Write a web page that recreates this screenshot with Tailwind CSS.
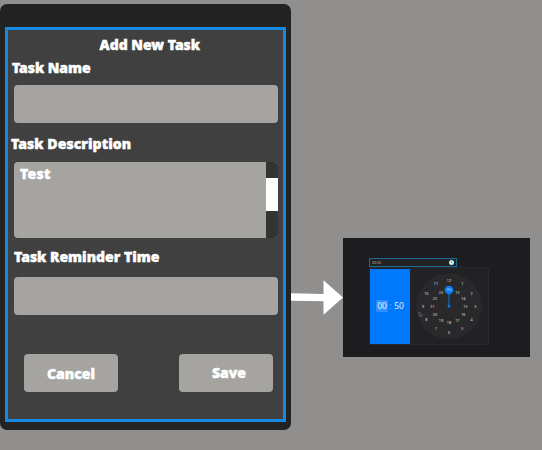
<!DOCTYPE html>
<html lang="en">
<head>
<meta charset="utf-8">
<title>Add New Task</title>
<script src="https://cdn.jsdelivr.net/npm/@tailwindcss/browser@4"></script>
</head>
<body class="flex h-[450px] w-[542px] items-start overflow-hidden bg-[#908f8d] font-['Noto_Sans','Open_Sans',sans-serif]">
  <main class="mt-1 h-[425.5px] w-[291px] shrink-0 rounded-[7px] bg-[#232323] pt-[23px] pl-[5px]">
    <form class="flex h-[395px] w-[281px] flex-col border-[3px] border-[#178ae0] bg-[#404040] text-[14px] leading-5 font-black text-white [-webkit-text-stroke:0.45px_white]">
      <h1 class="mt-[5px] ml-[91.5px] h-5 w-fit whitespace-nowrap">Add New Task</h1>
      <label class="mt-[3px] ml-[4px] h-5 w-fit tracking-[-0.05px] whitespace-nowrap">Task Name</label>
      <div class="mt-[7px] ml-[6px] h-[38px] w-[264px] rounded-[4px] bg-[#a5a4a0]"></div>
      <label class="mt-[11px] ml-[3px] h-5 w-fit tracking-[0.07px] whitespace-nowrap">Task Description</label>
      <div class="mt-[8px] ml-[6px] flex h-[76px] w-[264px] justify-between overflow-hidden rounded-[4px] bg-[#a5a4a0]">
        <span class="mt-[2px] ml-[6px] h-5 tracking-[0.3px] whitespace-nowrap">Test</span>
        <div class="w-[12px] bg-[#343432] pt-4"><div class="h-[33px] bg-white"></div></div>
      </div>
      <label class="mt-[9px] ml-[6px] h-5 w-fit whitespace-nowrap">Task Reminder Time</label>
      <div class="mt-[10px] ml-[6px] h-[38px] w-[264px] rounded-[4px] bg-[#a5a4a0]"></div>
      <div class="mt-[39px] ml-[16px] flex w-[249px] justify-between">
        <button type="button" class="h-[38px] w-[94px] rounded-[4px] bg-[#a5a4a0] pt-[1px]">Cancel</button>
        <button type="button" class="h-[38px] w-[94px] rounded-[4px] bg-[#a5a4a0] pr-0 pb-[1px] pl-[6px]">Save</button>
      </div>
    </form>
  </main>
  <svg class="mt-[280px] h-[35px] w-[52px] shrink-0" viewBox="0 0 52 35" fill="white"><path d="M0 13.3 32.5 14V.3L52 17.5 32.5 34.8V21.3L0 20.7Z"/></svg>
  <section class="mt-[237.5px] h-[119px] w-[186.5px] shrink-0 bg-[#1d1d1f] pt-5 pl-[26px]">
    <div class="flex h-[9.5px] w-[88px] items-center justify-between border border-[#176b94] bg-[#222225] pr-[2px] pl-[2px] text-[3.5px] leading-none text-[#bbb]">
      <span>00:50</span><svg class="size-[5px]" viewBox="0 0 10 10"><circle cx="5" cy="5" r="5" fill="#c9f0ee"/><path d="M5 2v3l2 1" fill="none" stroke="#297079"/></svg>
    </div>
    <div class="flex h-[78px] w-[119.5px] rounded-[2px] border border-[#29292d] bg-[#222226]">
      <div class="mt-[0.5px] flex h-[75px] w-[40px] items-center justify-center gap-[1.5px] bg-[#0078fc] text-[8.5px] leading-none text-[#e1efff]">
        <span class="rounded-[1px] bg-[#2e8ffd] px-[1px] py-[2px]">00</span><span class="text-[#78b5fa]">:</span><span class="pl-[1px]">50</span>
      </div>
      <svg class="ml-[5px] h-[76px] w-[70px]" viewBox="0 0 70 76" fill="#c4c4c8" font-family="Noto Sans, sans-serif" font-size="3.8" font-weight="500" text-anchor="middle">
        <circle cx="34" cy="38.3" r="33" fill="#29292c"/>
        <path d="M34 22v16" stroke="#0878e8"/><circle cx="34" cy="38.3" r="1.4" fill="#0878e8"/><circle cx="34" cy="22" r="4.3" fill="#087cf4"/>
        <text x="34" y="13.5">12</text><text x="47.3" y="17">1</text><text x="56.7" y="26.5">2</text><text x="60.3" y="39.8">3</text><text x="56.7" y="52.8">4</text><text x="47.3" y="62.4">5</text><text x="34" y="65.8">6</text><text x="21" y="62.4">7</text><text x="11.3" y="52.8">8</text><text x="8" y="39.8">9</text><text x="11.3" y="26.5">10</text><text x="21" y="17">11</text>
        <text x="34" y="23.3" fill="#9bd0ff">00</text><text x="42.3" y="25.7">13</text><text x="48.3" y="31.5">14</text><text x="50.5" y="39.8">15</text><text x="48.3" y="48">16</text><text x="42.3" y="54">17</text><text x="34" y="56.2">18</text><text x="26" y="54">19</text><text x="20" y="48">20</text><text x="17.5" y="39.8">21</text><text x="20" y="31.5">22</text><text x="26" y="25.7">23</text>
        <path d="m4 44 .3 4 1-.8.8 1.6.7-.4-.8-1.5h1.3Z" fill="#111" stroke="#aaa" stroke-width=".4"/>
      </svg>
    </div>
  </section>
</body>
</html>
